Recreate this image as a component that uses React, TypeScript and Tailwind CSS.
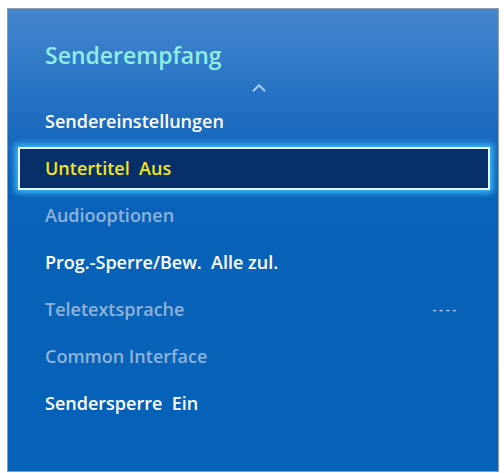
import { ChevronUp } from 'lucide-react';

type Item = {
  label: string;
  tone: 'on' | 'off' | 'selected';
  value?: string;
};

const items: Item[] = [
  { label: 'Sendereinstellungen', tone: 'on' },
  { label: 'Untertitel  Aus', tone: 'selected' },
  { label: 'Audiooptionen', tone: 'off' },
  { label: 'Prog.-Sperre/Bew.  Alle zul.', tone: 'on' },
  { label: 'Teletextsprache', tone: 'off', value: '----' },
  { label: 'Common Interface', tone: 'off' },
  { label: 'Sendersperre  Ein', tone: 'on' },
];

const MenuRow = ({ item }: { item: Item }) => {
  if (item.tone === 'selected') {
    return (
      <div className="h-[47px] py-[2px]">
        <div className="h-full flex items-center pl-[25px] border-2 border-[#e4faff] bg-[#07306a] shadow-[0_0_6px_3px_rgba(70,200,255,0.85)]">
          <span className="text-[18px] font-semibold text-[#f2e41e] whitespace-pre">{item.label}</span>
        </div>
      </div>
    );
  }
  return (
    <div className="h-[47px] flex items-center justify-between pl-[27px] pr-[31px]">
      <span
        className={
          item.tone === 'on'
            ? 'text-[18px] font-semibold text-white whitespace-pre'
            : 'text-[18px] font-semibold text-[#8fb3d8] whitespace-pre'
        }
      >
        {item.label}
      </span>
      {item.value && <span className="text-[11px] font-bold text-[#b8d4f0] tracking-[3px]">{item.value}</span>}
    </div>
  );
};

export default function App() {
  return (
    <div className="w-[504px] h-[473px] bg-white overflow-hidden pt-[8px] pl-[7px] font-['Open_Sans',sans-serif]">
      <div className="w-[492px] h-[464px] border border-[#8d9db3] bg-[linear-gradient(180deg,#4587cf_0%,#216ec2_22%,#0a62b9_38%,#0562b8_100%)] flex flex-col pl-[10px] pr-[8px]">
        {/* Title */}
        <div className="pt-[31px] pl-[27px] h-[72px]">
          <h1 className="text-[23px] leading-[30px] font-semibold text-[#8eeee2]">Senderempfang</h1>
        </div>

        {/* Scroll up indicator */}
        <div className="h-[17px] flex justify-center pl-[10px]">
          <ChevronUp size={22} strokeWidth={2} className="text-[#a8d4f4] -mt-[4px]" />
        </div>

        {/* Items */}
        <div className="flex flex-col">
          {items.map((item) => (
            <MenuRow key={item.label} item={item} />
          ))}
        </div>
      </div>
    </div>
  );
}
